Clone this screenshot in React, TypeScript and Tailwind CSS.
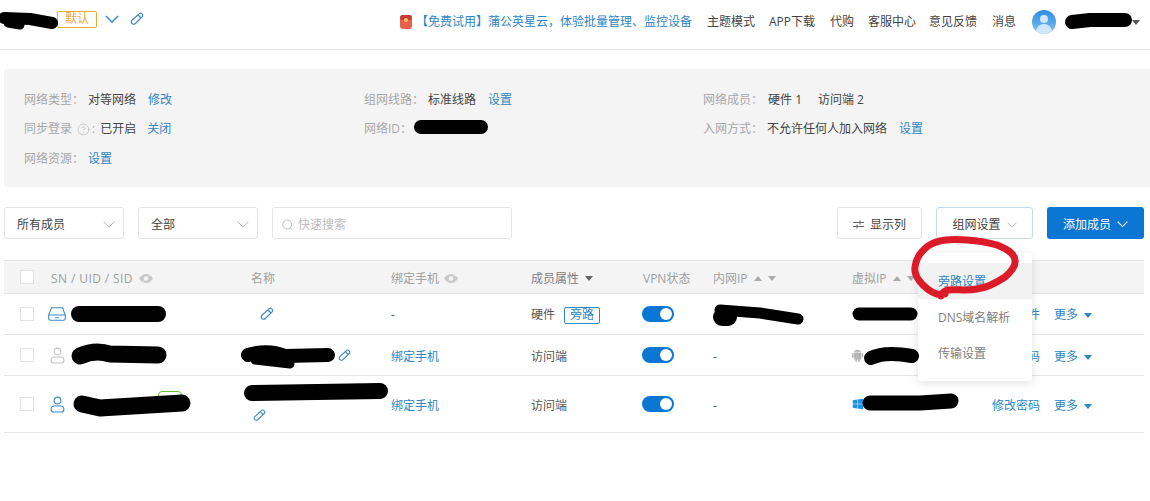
import { CircleHelp } from 'lucide-react'
import { AiFillAndroid } from 'react-icons/ai'
import { FaWindows } from 'react-icons/fa'

const Pencil = ({ size = 14 }: { size?: number }) => (
	<svg width={size} height={size} viewBox="0 0 14 14" fill="none" stroke="#3d8ac9" strokeWidth="1.2">
		<path d="M9.3 1.6a1.6 1.6 0 0 1 2.3 0l.7.7a1.6 1.6 0 0 1 0 2.3L5.4 11.5a2.4 2.4 0 0 1-3.4 0 2.4 2.4 0 0 1 0-3.3z" />
		<path d="M8 3l3 3" />
	</svg>
)

const Chevron = ({ size = 12, color = '#b5b5b5', width = 1 }: { size?: number; color?: string; width?: number }) => (
	<svg width={size} height={size * 0.6} viewBox="0 0 12 7" fill="none" stroke={color} strokeWidth={width}>
		<path d="M.7.7 6 6l5.3-5.3" />
	</svg>
)

const Caret = ({ up = false, color = '#666' }: { up?: boolean; color?: string }) => (
	<svg width="8" height="5" viewBox="0 0 8 5" fill={color}>
		<path d={up ? 'M4 0l4 5H0z' : 'M0 0h8L4 5z'} />
	</svg>
)

const Eye = () => (
	<svg width="14" height="9" viewBox="0 0 14 9">
		<path d="M0 4.5C2 1.5 4.5 0 7 0s5 1.5 7 4.5C12 7.500 9.500 9 7 9S2 7.500 0 4.500z" fill="#c9c9c9" />
		<circle cx="7" cy="4.500" r="2.300" fill="#f4f4f4" />
		<path d="M3 8.500 11 .5" stroke="#f4f4f4" strokeWidth=".6" />
	</svg>
)

const Person = ({ color }: { color: string }) => (
	<svg width="15" height="17" viewBox="0 0 15 17" fill="none" stroke={color} strokeWidth="1.1">
		<circle cx="7.500" cy="4.500" r="3.400" />
		<path d="M4.500 10h6a3.400 3.400 0 0 1 3.400 3.400 2.600 2.600 0 0 1-2.600 2.600H3.700a2.600 2.600 0 0 1-2.600-2.600A3.400 3.400 0 0 1 4.500 10z" />
	</svg>
)

const Drive = () => (
	<svg width="18" height="14" viewBox="0 0 18 14" fill="none" stroke="#3d8ac9" strokeWidth="1.1">
		<path d="M3.500.7h11l2.800 7.300v3.500a1.800 1.800 0 0 1-1.800 1.800h-13A1.800 1.800 0 0 1 .7 11.500V8z" />
		<path d="M.7 8h16.600M7 10.700h4" />
	</svg>
)

const Check = () => <span className="block h-[14px] w-[14px] border border-[#e2e2e2] bg-white" />

const Toggle = () => (
	<span className="flex h-[16px] w-[32px] items-center justify-end rounded-full bg-[#0b76d4] pr-[2px]">
		<span className="h-[12px] w-[12px] rounded-full bg-white" />
	</span>
)

const More = () => (
	<span className="flex items-center gap-[6px] text-[#2f86c5]">
		更多 <Caret color="#2f86c5" />
	</span>
)

const cols = 'grid grid-cols-[47px_200px_140px_140px_112px_70px_139px_1fr_152px] items-center'

const InfoItem = ({ label, value, link }: { label: string; value?: string; link?: string }) => (
	<div className="flex items-center">
		<span className="text-[#a8a8a8]">{label}：</span>
		{value && <span className="mr-[12px] ml-[4px] text-[#444]">{value}</span>}
		{link && <a className={value ? 'text-[#2f86c5]' : 'ml-[4px] text-[#2f86c5]'}>{link}</a>}
	</div>
)

const Row = ({ height, textPad, icon, sn, name, phone, attr, ip, virtual, action }: {
	height: string
	textPad: string
	icon: React.ReactNode
	sn?: React.ReactNode
	name: React.ReactNode
	phone: React.ReactNode
	attr: React.ReactNode
	ip?: string
	virtual?: React.ReactNode
	action: string
}) => (
	<div className={`${cols} ${height} border-b border-[#e6e6e6] text-[#555]`}>
		<div className="pl-[16px]"><Check /></div>
		<div className="flex items-center">
			<span className="-ml-[4px] flex w-[20px] justify-center">{icon}</span>
			{sn}
		</div>
		<div>{name}</div>
		<div className={textPad}>{phone}</div>
		<div className={textPad}>{attr}</div>
		<div className="-ml-px"><Toggle /></div>
		<div className={textPad}>{ip}</div>
		<div>{virtual}</div>
		<div className={`flex items-center justify-end gap-[14px] pr-[52px] ${textPad}`}>
			<span className="text-[#2f86c5]">{action}</span>
			<More />
		</div>
	</div>
)

export default function App() {
	return (
		<div className="relative h-[501px] w-[1150px] overflow-hidden bg-white text-[12px] font-['Open_Sans','Noto_Sans_CJK_SC',sans-serif] text-[#444]">
			{/* Top bar */}
			<header className="flex h-[50px] items-start border-b border-[#e8e8e8] pt-[10px]">
				<div className="ml-[57px] flex h-[18px] items-center">
					<span className="flex h-[17px] w-[40px] items-center justify-center rounded-[2px] border border-[#eda93c] text-[#eda93c]">默认</span>
					<span className="ml-[8px]"><Chevron size={14} color="#3d8ac9" width={1.2} /></span>
					<span className="ml-[11px]"><Pencil /></span>
				</div>
				<div className="ml-auto flex h-[24px] items-center pr-[10px]">
					<span className="relative mr-[4px] h-[14px] w-[12px] overflow-hidden rounded-[3px] bg-[#e8604a]">
						<span className="absolute inset-x-0 top-0 h-[5px] rounded-b-[3px] bg-[#c93a33]" />
						<span className="absolute top-[3px] left-[4px] h-[4px] w-[4px] rounded-full bg-[#f5c26b]" />
					</span>
					<a className="text-[#2f86c5]">【免费试用】蒲公英星云，体验批量管理、监控设备</a>
					<span className="ml-[15px]">主题模式</span>
					<span className="ml-[14px]">APP下载</span>
					<span className="ml-[15px]">代购</span>
					<span className="ml-[14px]">客服中心</span>
					<span className="ml-[13px]">意见反馈</span>
					<span className="ml-[15px]">消息</span>
					<span className="relative ml-[16px] h-[24px] w-[24px] overflow-hidden rounded-full bg-linear-to-b from-[#2b8de0] to-[#7cc0f7]">
						<span className="absolute top-[5px] left-[8px] h-[8px] w-[8px] rounded-full bg-[#cfe6fb]" />
						<span className="absolute top-[14px] left-[4px] h-[12px] w-[16px] rounded-t-full bg-[#cfe6fb]" />
					</span>
					<span className="ml-[76px]"><Caret color="#555" /></span>
				</div>
			</header>

			{/* Network info */}
			<section className="mt-[19px] ml-[4px] grid h-[118px] grid-cols-[340px_339px_1fr] content-start rounded-l-[3px] bg-[#f4f4f4] pt-[16px] pl-[20px] auto-rows-[29.500px] items-center">
				<InfoItem label="网络类型" value="对等网络" link="修改" />
				<InfoItem label="组网线路" value="标准线路" link="设置" />
				<div className="flex items-center">
					<span className="text-[#a8a8a8]">网络成员：</span>
					<span className="ml-[5px]">硬件 1</span>
					<span className="ml-[16px]">访问端 2</span>
				</div>
				<div className="flex items-center">
					<span className="text-[#a8a8a8]">同步登录</span>
					<CircleHelp size={13} strokeWidth={1} className="mr-[2px] ml-[5px] text-[#a8a8a8]" />
					<span className="text-[#a8a8a8]">:</span>
					<span className="mr-[11px] ml-[5px]">已开启</span>
					<a className="text-[#2f86c5]">关闭</a>
				</div>
				<div className="text-[#a8a8a8]">网络ID：</div>
				<InfoItem label="入网方式" value="不允许任何人加入网络" link="设置" />
				<InfoItem label="网络资源" link="设置" />
			</section>

			{/* Filters */}
			<section className="mt-[20px] ml-[4px] flex h-[32px] w-[1140px] items-stretch">
				<div className="flex w-[120px] items-center justify-between rounded-[3px] border border-[#e4e4e4] pt-[3px] pr-[8px] pl-[12px]">
					所有成员 <Chevron />
				</div>
				<div className="ml-[14px] flex w-[120px] items-center justify-between rounded-[3px] border border-[#e4e4e4] pt-[3px] pr-[8px] pl-[12px]">
					全部 <Chevron />
				</div>
				<div className="ml-[14px] flex w-[240px] items-center rounded-[3px] border border-[#e4e4e4] pt-[3px] pl-[9px] text-[#bdbdbd]">
					<svg width="11" height="12" viewBox="0 0 11 12" fill="none" stroke="#bdbdbd" className="mr-[5px]">
						<circle cx="5.200" cy="5.500" r="4.500" />
						<path d="M8.500 9l1.500 2" />
					</svg>
					快速搜索
				</div>
				<div className="ml-auto flex w-[85px] items-center justify-center gap-[6px] rounded-[3px] border border-[#e4e4e4] pt-[3px]">
					<svg width="11" height="9" viewBox="0 0 11 9" fill="none" stroke="#666">
						<path d="M0 2.500h11M0 6.500h11" />
						<path d="M7 .5v4M4 4.500v4" />
					</svg>
					显示列
				</div>
				<div className="relative ml-[14px] flex w-[97px] items-center justify-center gap-[6px] rounded-[3px] border border-[#c4d9ea] pt-[3px]">
					组网设置 <Chevron size={10} />
					{/* Dropdown */}
					<div className="absolute top-[45px] left-[-19px] z-10 w-[114px] rounded-[3px] bg-white pt-[10px] pb-[10px] shadow-[0_2px_10px_rgba(0,0,0,0.12)]">
						<div className="flex h-[36px] items-center bg-[#f2f2f2] pt-[2px] pl-[20px] text-[#2f86c5]">旁路设置</div>
						<div className="flex h-[36px] items-center pt-[2px] pl-[20px] text-[#808080]">DNS域名解析</div>
						<div className="flex h-[36px] items-center pt-[2px] pl-[20px] text-[#808080]">传输设置</div>
					</div>
				</div>
				<div className="ml-[14px] flex w-[97px] items-center justify-center gap-[6px] rounded-[3px] bg-[#0b76d4] pt-[3px] text-white">
					添加成员 <Chevron size={11} color="#fff" width={1.2} />
				</div>
			</section>

			{/* Members table */}
			<section className="mt-[21px] ml-[4px] w-[1140px]">
				<div className={`${cols} h-[34px] border-y border-[#e4e4e4] bg-[#f4f4f4] text-[#a0a0a0]`}>
					<div className="pl-[16px]"><Check /></div>
					<div className="flex items-center gap-[6px] pt-[3px] tracking-[0.4px]">SN / UID / SID <Eye /></div>
					<div className="pt-[3px]">名称</div>
					<div className="flex items-center gap-[5px] pt-[3px]">绑定手机 <Eye /></div>
					<div className="flex items-center gap-[6px] pt-[3px] text-[#808080]">成员属性 <Caret /></div>
					<div className="pt-[3px]">VPN状态</div>
					<div className="flex items-center gap-[6px] pt-[3px]">内网IP <Caret up color="#aaa" /> <Caret color="#aaa" /></div>
					<div className="flex items-center gap-[6px] pt-[3px]">虚拟IP <Caret up color="#aaa" /> <Caret color="#aaa" /></div>
					<div />
				</div>
				<Row
					height="h-[41px]"
					textPad="pt-[2px]"
					icon={<Drive />}
					name={<span className="ml-[9px] block w-fit"><Pencil /></span>}
					phone="-"
					attr={
						<span className="flex items-center gap-[9px]">
							硬件
							<span className="flex h-[17px] w-[36px] items-center justify-center rounded-[2px] border border-[#2f86c5] text-[#2f86c5]">旁路</span>
						</span>
					}
					action="查看文件"
				/>
				<Row
					height="h-[41px]"
					textPad="pt-[4px]"
					icon={<Person color="#c4c4c4" />}
					name={<span className="ml-[87px] block w-fit"><Pencil size={13} /></span>}
					phone={<a className="text-[#2f86c5]">绑定手机</a>}
					attr="访问端"
					ip="-"
					virtual={<AiFillAndroid size={15} className="-ml-[2px] text-[#b5b5b5]" />}
					action="修改密码"
				/>
				<Row
					height="h-[57px]"
					textPad="pt-[4px]"
					icon={<Person color="#3d8ac9" />}
					sn={<span className="mb-[12px] ml-[91px] h-[14px] w-[24px] rounded-[4px] border border-[#6dbb3a]" />}
					name={<span className="mt-[22px] ml-[2px] block w-fit"><Pencil size={13} /></span>}
					phone={<a className="text-[#2f86c5]">绑定手机</a>}
					attr="访问端"
					ip="-"
					virtual={<FaWindows size={12} className="text-[#1f8fe6]" />}
					action="修改密码"
				/>
			</section>

			{/* Redaction scribbles and the red marker ring drawn over the screenshot */}
			<svg className="pointer-events-none absolute inset-0 z-20" width="1150" height="501" fill="none" strokeLinecap="round" strokeLinejoin="round">
				<g stroke="#000">
					<path d="M4 18 30 19 52 23" strokeWidth="12" />
					<path d="M8 23 20 25" strokeWidth="9" />
					<path d="M1072 22 1090 20 1125 20" strokeWidth="14" />
					<path d="M421 127h60" strokeWidth="14" />
					<path d="M79 314h79" strokeWidth="16" />
					<path d="M80 356Q95 349 110 354L158 355" strokeWidth="17" />
					<path d="M248 355Q268 349 285 356L328 355" strokeWidth="14" />
					<path d="M255 360 290 364" strokeWidth="9" />
					<path d="M82 404 100 408 182 403" strokeWidth="17" />
					<path d="M252 393 380 391" strokeWidth="16" />
					<path d="M722 317h6" strokeWidth="18" />
					<path d="M720 310 760 313 798 319" strokeWidth="11" />
					<path d="M859 314h52" strokeWidth="13" />
					<path d="M871 358Q885 351 912 356" strokeWidth="14" />
					<path d="M870 403 920 403 951 401" strokeWidth="15" />
				</g>
				<path
					d="M945 294C938 296 930 292 923 285 917 279 914 273 915 267 916 258 920 252 928 246 938 239 952 239 967 240 980 241 990 243 997 245 1007 249 1014 253 1015 260 1016 266 1012 271 1005 277 996 283 985 288 977 289 965 291 955 289 948 290 944 291 942 293 941 296"
					stroke="#dc1b28"
					strokeWidth="7"
				/>
			</svg>
		</div>
	)
}
